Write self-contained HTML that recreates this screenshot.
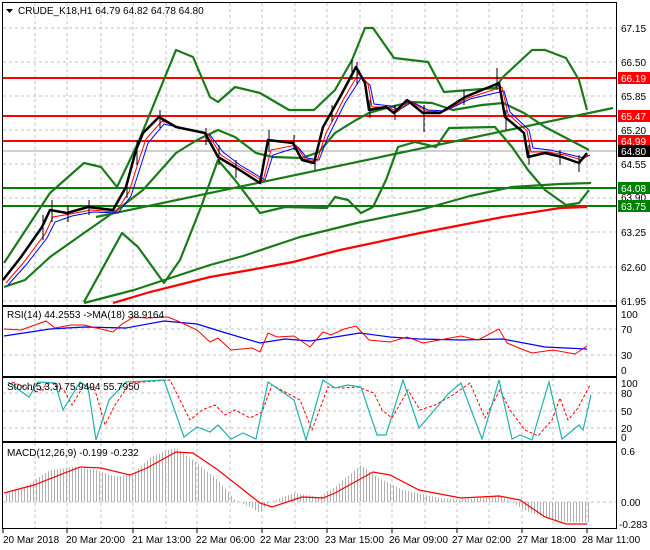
<!DOCTYPE html><html><head><style>
body{margin:0;background:#fff;width:650px;height:550px;overflow:hidden}
svg{display:block;font-family:"Liberation Sans",sans-serif;font-size:10px}
</style></head><body>
<svg width="650" height="550" viewBox="0 0 650 550">
<defs>
<pattern id="st" width="3" height="10" patternUnits="userSpaceOnUse"><rect x="0" y="0" width="1" height="10" fill="#b0b0b0"/></pattern>
</defs>
<rect width="650" height="550" fill="#fff"/>
<!-- grid -->
<g stroke="#c0c0c0" stroke-dasharray="3,3" stroke-width="1">
<path d="M35 3V305M67 3V305M101 3V305M133 3V305M166 3V305M197 3V305M230 3V305M262 3V305M295 3V305M327 3V305M360 3V305M392 3V305M425 3V305M457 3V305M489 3V305M522 3V305M553 3V305M587 3V305"/>
<path d="M35 307V376M67 307V376M101 307V376M133 307V376M166 307V376M197 307V376M230 307V376M262 307V376M295 307V376M327 307V376M360 307V376M392 307V376M425 307V376M457 307V376M489 307V376M522 307V376M553 307V376M587 307V376"/>
<path d="M35 378V441M67 378V441M101 378V441M133 378V441M166 378V441M197 378V441M230 378V441M262 378V441M295 378V441M327 378V441M360 378V441M392 378V441M425 378V441M457 378V441M489 378V441M522 378V441M553 378V441M587 378V441"/>
<path d="M35 443V528M67 443V528M101 443V528M133 443V528M166 443V528M197 443V528M230 443V528M262 443V528M295 443V528M327 443V528M360 443V528M392 443V528M425 443V528M457 443V528M489 443V528M522 443V528M553 443V528M587 443V528"/>
<path d="M3 28H617M3 62H617M3 96H617M3 130H617M3 164H617M3 198H617M3 232H617M3 267H617M3 301H617"/>
<path d="M3 329H617M3 355H617M3 393H617M3 411H617M3 428H617M3 502H617"/>
</g>
<!-- horizontal levels -->
<path d="M3 151H617" stroke="#a0a0a0" stroke-width="1"/>
<g stroke="#ff0000" stroke-width="2"><path d="M3 78H617M3 116H617M3 141H617"/></g>
<g stroke="#008000" stroke-width="2"><path d="M3 188H617M3 206H617"/></g>
<!-- bands -->
<g fill="none" stroke="#1a7a1a" stroke-width="2.2" stroke-linejoin="round">
<polyline points="4,263 50,193 84,163 101,167 117,187 138,143 176,50 193,57 210,97 218,102 235,87 260,93 289,110 314,110 335,90 352,60 365,28 373,28 394,58 428,62 444,92 495,88 503,77 532,50 545,50 566,58 579,80 587,110"/>
<polyline points="4,287 25,280 50,257 84,233 117,210 143,190 176,153 197,140 218,130 235,137 256,153 273,157 302,158 319,152 335,133 356,120 369,113 390,107 411,102 432,103 453,110 482,105 503,103 524,113 545,127 570,140 589,150"/>
<polyline points="84,302 122,233 138,247 164,283 180,260 201,207 218,160 235,180 260,213 285,207 327,208 335,197 348,200 361,213 373,207 386,180 398,147 415,142 436,147 449,128 495,127 512,147 528,170 545,190 566,205 579,203 589,190"/>
<polyline points="96,217 613,108"/>
<polyline points="84,303 134,290 210,265 243,256 300,237 361,222 420,210 470,196 512,187 560,184 591,183"/>
</g>
<polyline fill="none" stroke="#ff0000" stroke-width="2.2" points="113,303 150,292 210,277 250,270 293,262 340,250 420,233 503,217 560,208 587,207"/>
<!-- MAs -->
<polyline fill="none" stroke="#0000ff" stroke-width="1" points="8,285 26,265 47,238 55,222 72,216 93,212 118,213 131,196 141,165 148,143 164,124 181,128 210,135 223,152 240,165 265,180 273,155 298,147 307,158 319,160 328,137 336,121 345,103 361,78 370,85 374,104 391,106 399,110 412,102 428,110 445,111 470,99 504,91 510,112 529,130 533,148 550,150 567,154 584,158 590,155"/>
<polyline fill="none" stroke="#ff0000" stroke-width="1" points="6,283 24,262 45,234 53,217 70,214 91,210 116,212 129,192 139,160 146,139 162,121 179,127 208,134 221,155 238,166 263,181 271,150 296,145 305,159 317,161 326,133 334,118 343,100 359,73 368,84 372,107 389,107 397,112 410,101 426,111 443,112 468,98 502,87 508,114 527,131 531,152 548,152 565,155 582,160 588,155"/>
<polyline fill="none" stroke="#000" stroke-width="2.5" stroke-linejoin="round" points="3,280 21,257 42,227 50,210 67,213 88,207 113,210 126,187 136,150 143,133 159,117 176,127 205,133 218,157 235,167 260,183 268,140 293,143 302,160 314,163 323,127 331,113 340,97 356,67 365,83 369,110 386,107 394,113 407,100 423,113 440,113 465,97 499,83 505,117 524,133 528,157 545,153 562,157 579,163 587,153"/>
<g stroke="#000" stroke-width="1"><path d="M43 215V240M52 200V222M68 205V222M89 200V215M127 180V198M137 140V165M160 110V128M206 128V145M219 145V165M236 160V178M269 130V152M294 135V150M315 155V170M332 105V122M352 60V80M357 62V85M370 100V118M395 105V120M424 105V132M464 90V105M497 68V90M506 110V130M529 145V165M560 150V165M579 155V172"/></g>
<!-- panel borders -->
<g fill="none" stroke="#000" stroke-width="1">
<rect x="2.5" y="2.5" width="614" height="303"/>
<rect x="2.5" y="306.5" width="614" height="70"/>
<rect x="2.5" y="377.5" width="614" height="64"/>
<rect x="2.5" y="442.5" width="614" height="86"/>
</g>
<!-- RSI -->
<polyline fill="none" stroke="#0000ff" stroke-width="1.2" points="4,336 50,329 84,327 126,328 164,321 197,324 226,333 260,343 285,339 310,341 335,337 360,333 390,337 419,339 461,340 503,339 545,347 587,349"/>
<polyline fill="none" stroke="#ff0000" stroke-width="1" points="4,329 21,330 46,321 55,328 71,325 84,325 113,332 122,324 134,317 147,318 168,317 180,322 197,330 210,342 218,338 231,350 252,348 260,352 268,333 277,337 294,336 310,347 323,332 331,335 344,329 356,326 369,340 390,342 407,337 423,343 461,336 478,340 499,329 507,343 524,350 532,353 553,350 575,354 587,346"/>
<text x="7" y="318" fill="#000">RSI(14) 44.2553  -&gt;MA(18) 38.9164</text>
<!-- Stoch -->
<polyline fill="none" stroke="#ff0000" stroke-width="1" stroke-dasharray="3,2" points="12,382 38,392 50,382 64,390 72,405 84,385 95,390 105,425 115,405 130,383 170,380 190,420 202,410 215,405 225,415 235,410 250,418 262,412 272,385 300,400 312,430 328,387 343,388 358,387 374,393 382,410 392,418 408,390 420,410 435,405 453,395 470,383 485,418 500,390 510,410 525,430 538,436 552,420 560,398 568,420 578,408 590,385"/>
<polyline fill="none" stroke="#20b0b0" stroke-width="1.2" points="8,382 29,397 38,382 55,383 63,410 80,382 88,387 96,440 109,400 126,382 164,380 184,437 197,427 210,432 218,425 231,439 243,433 256,439 268,382 294,400 306,440 323,380 335,388 348,385 361,387 377,435 386,435 403,380 419,428 449,393 461,383 482,439 499,380 512,439 520,435 532,440 549,382 562,439 579,425 583,430 591,395"/>
<text x="7" y="390" fill="#000">Stoch(5,3,3) 75.9494 55.7950</text>
<!-- MACD -->
<polygon fill="url(#st)" points="4,502 4,495 25,487 50,470 75,467 96,470 117,477 134,473 151,457 168,450 176,448 193,460 218,480 235,500 252,508 260,513 268,503 294,493 319,497 335,487 361,465 377,477 403,490 440,498 461,500 499,495 512,502 524,510 545,518 566,522 589,522 589,502"/>
<polyline fill="none" stroke="#ff0000" stroke-width="1.2" points="4,493 34,485 80,467 101,468 130,475 147,468 176,452 193,453 218,470 260,503 272,507 302,497 323,498 335,493 373,472 390,475 419,490 461,498 499,496 520,500 545,517 566,524 587,524"/>
<text x="7" y="456" fill="#000">MACD(12,26,9) -0.199 -0.232</text>
<!-- title -->
<path d="M6 9h7l-3.5 4z" fill="#000"/>
<text x="18" y="14" fill="#000">CRUDE_K18,H1  64.79 64.82 64.78 64.80</text>
<!-- right scale -->
<g fill="#000">
<text x="621" y="32">67.15</text><text x="621" y="66">66.50</text><text x="621" y="100">65.85</text><text x="621" y="134">65.20</text><text x="621" y="168">64.55</text><text x="621" y="201">63.90</text><text x="621" y="236">63.25</text><text x="621" y="271">62.60</text><text x="621" y="305">61.95</text>
<text x="621" y="318">100</text><text x="621" y="333">70</text><text x="621" y="359">30</text><text x="621" y="374">0</text>
<text x="621" y="387">100</text><text x="621" y="397">80</text><text x="621" y="415">50</text><text x="621" y="432">20</text><text x="621" y="441">0</text>
<text x="621" y="455">0.6</text><text x="621" y="506">0.00</text><text x="619" y="528">-0.283</text>
</g>
<rect x="618" y="72" width="32" height="12" fill="#ff0000"/><text x="621" y="82" fill="#fff">66.19</text>
<rect x="618" y="110" width="32" height="12" fill="#ff0000"/><text x="621" y="120" fill="#fff">65.47</text>
<rect x="618" y="135" width="32" height="12" fill="#ff0000"/><text x="621" y="145" fill="#fff">64.99</text>
<rect x="618" y="145" width="32" height="12" fill="#000"/><text x="621" y="155" fill="#fff">64.80</text>
<rect x="618" y="182" width="32" height="12" fill="#008000"/><text x="621" y="192" fill="#fff">64.08</text>
<rect x="618" y="200" width="32" height="12" fill="#008000"/><text x="621" y="210" fill="#fff">63.75</text>
<!-- time axis -->
<g stroke="#000"><path d="M3 529v4M67 529v4M133 529v4M197 529v4M262 529v4M327 529v4M392 529v4M457 529v4M522 529v4M587 529v4"/></g>
<g fill="#000">
<text x="3" y="543">20 Mar 2018</text><text x="66" y="543">20 Mar 20:00</text><text x="132" y="543">21 Mar 13:00</text><text x="196" y="543">22 Mar 06:00</text><text x="260" y="543">22 Mar 23:00</text><text x="325" y="543">23 Mar 15:00</text><text x="389" y="543">26 Mar 09:00</text><text x="452" y="543">27 Mar 02:00</text><text x="517" y="543">27 Mar 18:00</text><text x="582" y="543">28 Mar 11:00</text>
</g>
</svg>
</body></html>
